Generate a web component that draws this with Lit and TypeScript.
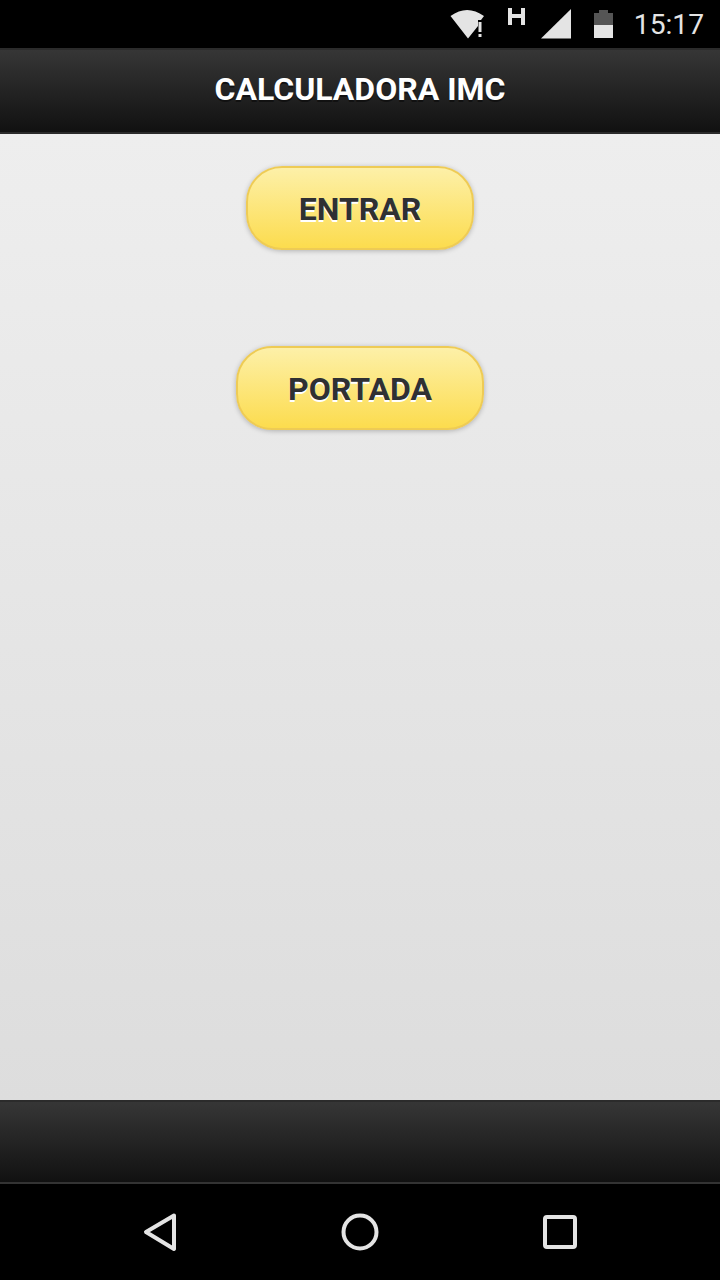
import { LitElement, html, css } from "lit";
import { customElement } from "lit/decorators.js";

@customElement("app-root")
export class AppRoot extends LitElement {
  static styles = css`
    :host { display: block; width: 720px; height: 1280px; font-family: Roboto, "Liberation Sans", sans-serif; overflow: hidden; background: #000; }
    .page { display: flex; flex-direction: column; height: 1280px; }
    .status { height: 48px; background: #000; display: flex; align-items: center; box-sizing: border-box; padding-right: 16px; justify-content: flex-end; position: relative; flex: none; }
    .status svg { position: absolute; left: 440px; top: 0; }
    .time { color: #e4e4e4; font-size: 28.200px; line-height: 48px; position: relative; top: 1px; }
    .bar { box-sizing: border-box; flex: none; background: linear-gradient(#363636, #111111); }
    .header { height: 86px; border-top: 2px solid #2b2b2b; border-bottom: 2px solid #2b2b2b; display: flex; align-items: center; justify-content: center; padding-bottom: 4px; }
    .title { color: #fff; font-size: 32px; font-weight: 700; text-shadow: 0 2px 0 #111; }
    .content { flex: 1; display: flex; flex-direction: column; align-items: center; gap: 96px; padding-top: 32px; background: linear-gradient(#eeeeee, #dddddd); box-sizing: border-box; }
    .btn { box-sizing: border-box; height: 84px; padding: 2px 50.500px 0; display: flex; align-items: center; justify-content: center; border: 2px solid #eecb55; border-radius: 36px; background: linear-gradient(#fdf0a8, #fcdc4e); color: #2f3033; font-size: 32px; font-weight: 700; text-shadow: 0 2px 0 #fff; box-shadow: 0 1px 5px rgba(0,0,0,0.25); }
    .footer { height: 84px; border-top: 2px solid #2b2b2b; border-bottom: 2px solid #333; }
    .nav { height: 96px; background: #000; display: flex; align-items: center; justify-content: center; flex: none; }
    .nav svg { display: block; }
  `;
  render() {
    return html`<div class="page">
      <div class="status">
        <svg width="190" height="48" viewBox="0 0 190 48">
          <path d="M10.500 16 Q27 4 44 16 L41 20 H38 V26 L28 38.500 Z" fill="#e4e4e4"/>
          <rect x="38.500" y="22" width="3" height="10" fill="#e4e4e4"/>
          <rect x="38.500" y="34" width="3" height="3" fill="#e4e4e4"/>
          <path d="M70 8v17M83 8v17M70 16h13" stroke="#e4e4e4" stroke-width="4" fill="none"/>
          <path d="M101 38.500 L131 9 V38.500 Z" fill="#e4e4e4"/>
          <path d="M154 13 h5 v-3 h9 v3 h5 v12 h-19 Z" fill="#555"/>
          <rect x="154" y="25" width="19" height="13" fill="#e4e4e4"/>
        </svg>
        <span class="time">15:17</span>
      </div>
      <div class="bar header"><span class="title">CALCULADORA IMC</span></div>
      <div class="content">
        <div class="btn">ENTRAR</div>
        <div class="btn">PORTADA</div>
      </div>
      <div class="bar footer"></div>
      <div class="nav">
        <svg width="480" height="96" viewBox="0 0 480 96">
          <path d="M54 31.500 L26 48 L54 65 Z" fill="none" stroke="#e4e4e4" stroke-width="4" stroke-linejoin="round"/>
          <circle cx="240" cy="48" r="16.500" fill="none" stroke="#e4e4e4" stroke-width="4"/>
          <rect x="425" y="33" width="30" height="30" rx="2" fill="none" stroke="#e4e4e4" stroke-width="4"/>
        </svg>
      </div>
    </div>`;
  }
}
